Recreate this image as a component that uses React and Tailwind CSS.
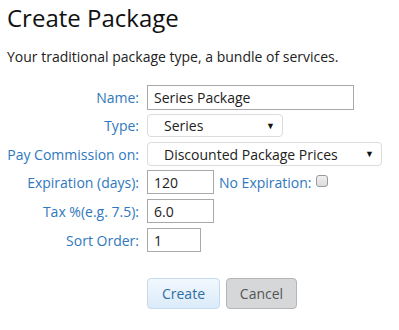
import React from 'react';

const labelCls = 'w-[132px] shrink-0 text-right text-[14px] text-[#2f78bd]';

function Row({ label, mt, children }) {
  return (
    <div className={`flex items-center ${mt}`}>
      <div className={labelCls}>{label}</div>
      <div className="ml-[8px] flex items-center">{children}</div>
    </div>
  );
}

function Select({ value, w, h }) {
  return (
    <div
      className={`${w} ${h} flex items-center justify-between rounded-[4px] border border-[#dcdcdc] bg-white pl-[16px] pr-[7px] text-[14px] text-[#222]`}
    >
      <span>{value}</span>
      <span className="text-[9px] text-[#111]">▼</span>
    </div>
  );
}

function Input({ value, w, h = 'h-[24px]' }) {
  return (
    <div className={`${w} ${h} flex items-center border border-[#a9a9a9] bg-white px-[6px] text-[14px] text-[#222]`}>
      {value}
    </div>
  );
}

export default function App() {
  return (
    <div className="min-h-[330px] w-[399px] bg-white pl-[7px] pt-[2px] font-['Open_Sans',sans-serif]">
      <h1 className="text-[24px] leading-[32px] text-[#111]">Create Package</h1>
      <p className="mt-[14px] text-[14px] leading-[18px] text-[#222]">
        Your traditional package type, a bundle of services.
      </p>

      <div className="mt-[19px]">
        <Row label="Name:" mt="">
          <Input value="Series Package" w="w-[207px]" h="h-[25px]" />
        </Row>
        <Row label="Type:" mt="mt-[4px]">
          <Select value="Series" w="w-[136px]" h="h-[23px]" />
        </Row>
        <Row label="Pay Commission on:" mt="mt-[5px]">
          <Select value="Discounted Package Prices" w="w-[235px]" h="h-[24px]" />
        </Row>
        <Row label="Expiration (days):" mt="mt-[4px]">
          <Input value="120" w="w-[67px]" />
          <span className="ml-[5px] text-[14px] text-[#2f78bd]">No Expiration:</span>
          <span className="ml-[4px] mb-[2px] h-[12px] w-[12px] rounded-[3px] border border-[#9a9a9a] bg-gradient-to-b from-[#f0f0f0] to-[#dcdcdc]" />
        </Row>
        <Row label="Tax %(e.g. 7.5):" mt="mt-[5px]">
          <Input value="6.0" w="w-[67px]" />
        </Row>
        <Row label="Sort Order:" mt="mt-[5px]">
          <Input value="1" w="w-[54px]" />
        </Row>
      </div>

      <div className="mt-[26px] flex gap-[6px] pl-[140px]">
        <button className="h-[31px] w-[73px] rounded-[4px] border border-[#c3daf0] bg-gradient-to-b from-[#f2f8fe] to-[#dbebfa] text-[14px] text-[#2f6ea5]">
          Create
        </button>
        <button className="h-[31px] w-[71px] rounded-[4px] border border-[#b3b5b7] bg-[#d5d7d9] text-[14px] text-[#555]">
          Cancel
        </button>
      </div>
    </div>
  );
}
